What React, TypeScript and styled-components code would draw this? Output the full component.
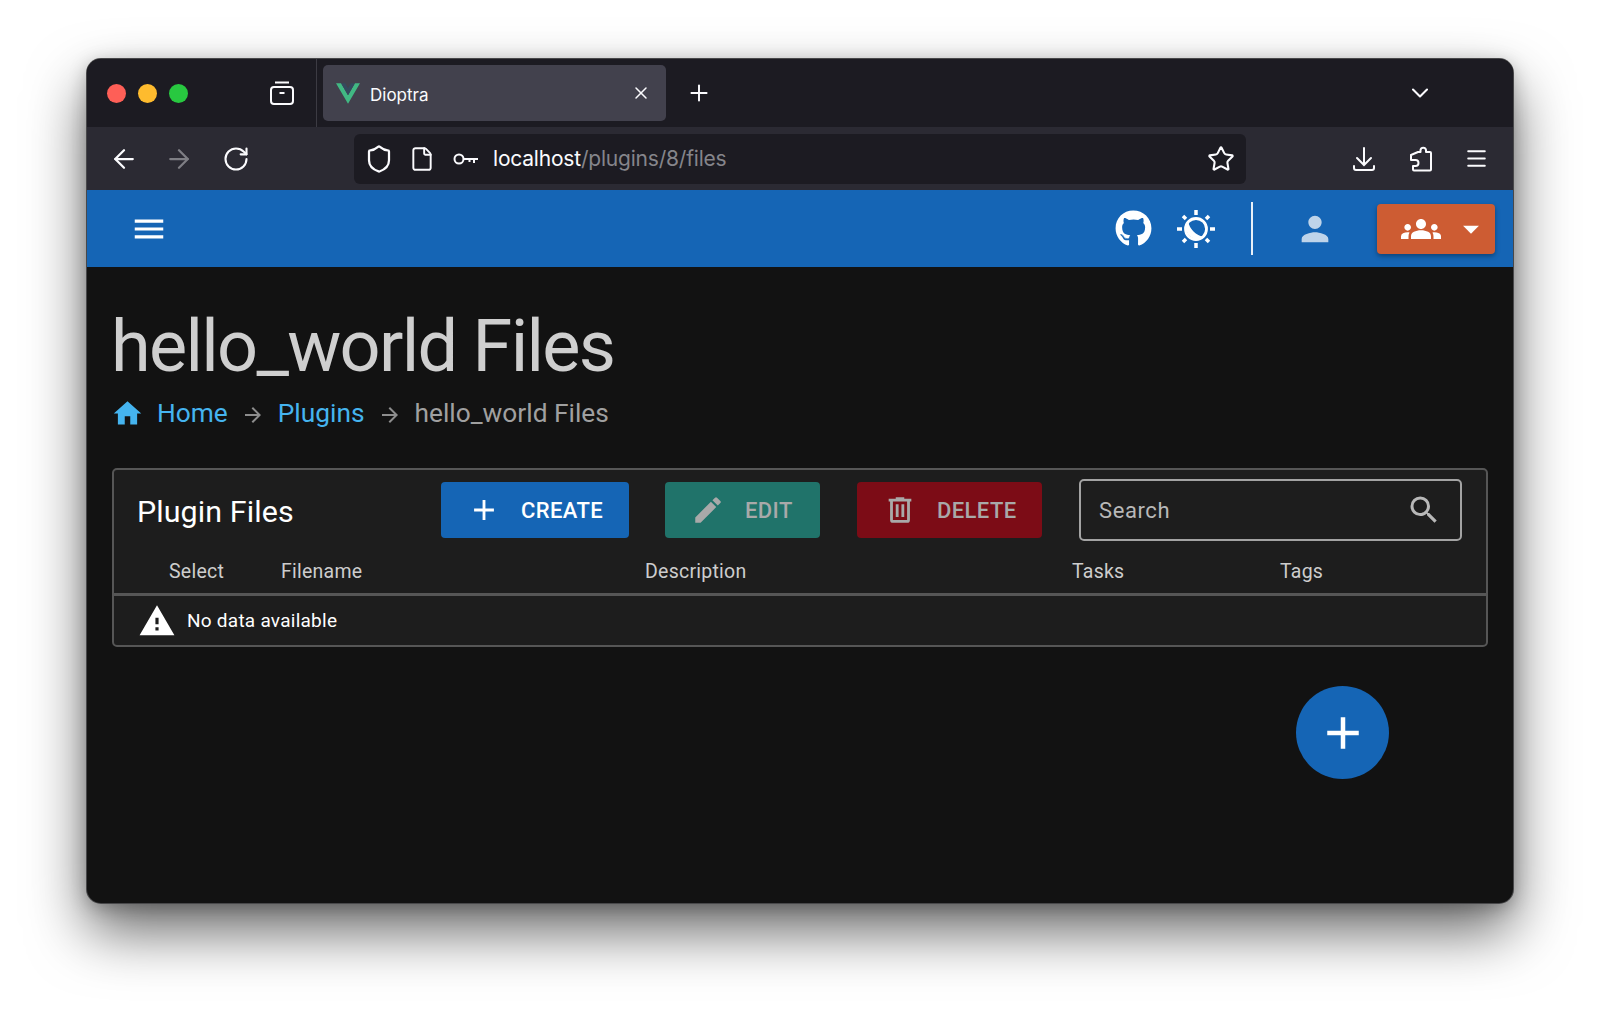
import * as React from "react";
import styled, { createGlobalStyle } from "styled-components";
import { ArrowLeft, ArrowRight, ChevronDown, File, Menu, Plus, RotateCw, Shield, Star, X } from "lucide-react";
import { FaGithub } from "react-icons/fa";
import { MdAdd, MdArrowDropDown, MdArrowForward, MdEdit, MdGroups, MdHome, MdMenu, MdPerson, MdSearch, MdWarning } from "react-icons/md";

const GlobalStyle = createGlobalStyle`
  html, body {
    margin: 0;
    padding: 0;
    background: #fff;
    overflow: hidden;
  }
  body {
    font-family: Roboto, "Liberation Sans", sans-serif;
  }
`;

const Stage = styled.div`
  width: 1600px;
  height: 1018px;
  padding: 59px 87px 0;
  box-sizing: border-box;
`;

const Window = styled.div`
  width: 1426px;
  height: 844px;
  display: flex;
  flex-direction: column;
  border-radius: 14px;
  overflow: hidden;
  background: #121212;
  box-shadow: 0 0 0 1px #48484a, 0 28px 58px rgba(0, 0, 0, 0.6), 0 4px 18px rgba(0, 0, 0, 0.25);
`;

const TabStrip = styled.div`
  height: 68px;
  flex: none;
  display: flex;
  align-items: center;
  background: #1c1b22;
  color: #fbfbfe;
`;

const Lights = styled.div`
  display: flex;
  gap: 12px;
  margin-left: 20px;
`;

const Light = styled.span<{ $color: string }>`
  width: 19px;
  height: 19px;
  border-radius: 50%;
  background: ${(p) => p.$color};
`;

const ViewButton = styled.div`
  width: 26px;
  height: 26px;
  margin-left: 81px;
  margin-right: 21px;
  display: flex;
`;

const Separator = styled.div`
  width: 1px;
  height: 100%;
  background: #3c3b43;
`;

const Tab = styled.div`
  width: 343px;
  height: 56px;
  margin-left: 6px;
  display: flex;
  align-items: center;
  border-radius: 5px;
  background: #42414d;
  font-family: Inter, sans-serif;
  font-size: 17px;
`;

const TabTitle = styled.span`
  margin-left: 10px;
  flex: 1;
  margin-top: 3px;
`;

const TabClose = styled.span`
  display: flex;
  margin-right: 15px;
`;

const NewTab = styled.span`
  display: flex;
  margin-left: 20px;
  flex: 1;
`;

const TabList = styled.span`
  display: flex;
  margin-right: 79px;
`;

const NavBar = styled.div`
  height: 63px;
  flex: none;
  display: flex;
  align-items: center;
  background: #2b2a33;
  color: #fbfbfe;
`;

const NavButton = styled.span<{ $dim?: boolean; $gap: number }>`
  display: flex;
  margin-left: ${(p) => p.$gap}px;
  opacity: ${(p) => (p.$dim ? 0.4 : 1)};
`;

const UrlBar = styled.div`
  width: 892px;
  height: 50px;
  margin-left: 104px;
  display: flex;
  align-items: center;
  border-radius: 6px;
  background: #1c1b22;
`;

const UrlText = styled.div`
  margin-left: 14px;
  flex: 1;
  font-family: Inter, sans-serif;
  font-size: 21px;
  letter-spacing: -0.2px;
  color: #fbfbfe;

  span {
    color: #85858b;
  }
`;

const StarButton = styled.span`
  display: flex;
  margin-right: 11px;
`;

const AppBar = styled.header`
  height: 77px;
  flex: none;
  display: flex;
  align-items: center;
  background: #1565b5;
  color: #fff;
`;

const BarIcon = styled.span<{ $gap: number; $dim?: boolean }>`
  display: flex;
  margin-left: ${(p) => p.$gap}px;
  opacity: ${(p) => (p.$dim ? 0.72 : 1)};
`;

const BarDivider = styled.div`
  width: 2px;
  height: 53px;
  margin-left: 35px;
  background: #fff;
  opacity: 0.9;
`;

const GroupButton = styled.button`
  width: 118px;
  height: 50px;
  margin-left: 42px;
  padding: 0 5px 0 24px;
  display: flex;
  align-items: center;
  justify-content: space-between;
  border: 0;
  border-radius: 4px;
  background: #cd5c33;
  color: #fff;
  box-shadow: 0 2px 5px rgba(0, 0, 0, 0.35);
`;

const Main = styled.main`
  flex: 1;
  display: flex;
  flex-direction: column;
  padding: 0 25px;
  color: #ccc;
`;

const Title = styled.h1`
  margin: 38px 0 0 -1px;
  font-size: 72px;
  line-height: 84px;
  font-weight: 400;
  letter-spacing: -1.7px;
  color: #cfcfcf;
`;

const Crumbs = styled.nav`
  margin-top: 9px;
  display: flex;
  align-items: center;
  height: 30px;
  font-size: 26.3px;
  color: #a0a0a0;
`;

const CrumbLink = styled.a`
  color: #45b4ef;
  text-decoration: none;
`;

const HomeIcon = styled.span`
  display: flex;
  margin-left: -1px;
  margin-right: 13px;
  color: #45b4ef;
`;

const CrumbArrow = styled.span`
  display: flex;
  margin: 3px 13px 0 13px;
  color: #8d8d8d;
`;

const Card = styled.section`
  margin-top: 40px;
  width: 1376px;
  height: 179px;
  box-sizing: border-box;
  border: 2px solid #565656;
  border-radius: 5px;
  background: #1d1d1d;
  display: flex;
  flex-direction: column;
`;

const CardTop = styled.div`
  height: 80px;
  flex: none;
  display: flex;
  align-items: center;
`;

const CardTitle = styled.h2`
  width: 304px;
  margin: 2px 0 0 23px;
  font-size: 30.4px;
  font-weight: 400;
  letter-spacing: 0.1px;
  color: #fff;
`;

const ActionButton = styled.button<{ $bg: string; $w: number; $on?: boolean; $gap: number }>`
  width: ${(p) => p.$w}px;
  height: 56px;
  margin-right: ${(p) => p.$gap}px;
  padding: 0 0 0 26px;
  flex: none;
  display: flex;
  align-items: center;
  gap: 20px;
  border: 0;
  border-radius: 4px;
  background: ${(p) => p.$bg};
  color: ${(p) => (p.$on ? "#fff" : "#a9a9a9")};
  font-family: inherit;
  font-size: 22px;
  font-weight: 500;
  letter-spacing: 0.4px;
  box-sizing: border-box;
`;

const SearchBox = styled.div`
  width: 383px;
  height: 62px;
  box-sizing: border-box;
  flex: none;
  display: flex;
  align-items: center;
  justify-content: space-between;
  padding: 0 18px;
  border: 2px solid #a3a3a3;
  border-radius: 5px;
  font-size: 22px;
  color: #b8b8b8;
  letter-spacing: 0.6px;
`;

const HeadRow = styled.div`
  flex: none;
  height: 46px;
  padding: 0 0 0 55px;
  display: grid;
  grid-template-columns: 112px 364px 427px 208px auto;
  align-items: center;
  box-sizing: border-box;
  border-bottom: 3px solid #565656;
  font-size: 19.5px;
  font-weight: 400;
  letter-spacing: 0.25px;
  color: #cdcdcd;
`;

const EmptyRow = styled.div`
  flex: 1;
  display: flex;
  align-items: center;
  padding-left: 24px;
  gap: 11px;
  font-size: 19px;
  letter-spacing: 0.25px;
  color: #fff;
`;

const Fab = styled.button`
  width: 93px;
  height: 93px;
  margin: 39px 0 0 1184px;
  display: flex;
  align-items: center;
  justify-content: center;
  padding: 0;
  border: 0;
  border-radius: 50%;
  background: #1565b5;
  color: #fff;
`;

const ThemeIcon = () => (
  <svg width="40" height="40" viewBox="0 0 40 40" fill="#fff">
    <g stroke="#fff" strokeWidth="3.500">
      <path d="M20 1v5M20 34v5M1 20h5M34 20h5M7 7l3 3M30 30l3 3M7 33l3-3M30 10l3-3" />
    </g>
    <circle cx="20" cy="20" r="10.500" fill="none" stroke="#fff" strokeWidth="2.800" />
    <path d="M12 12 A11.500 11.500 0 0 0 28 28 A20 20 0 0 1 12 12Z" />
  </svg>
);

const ViewIcon = () => (
  <svg width="26" height="26" viewBox="0 0 26 26" fill="none" stroke="#fbfbfe" strokeWidth="2">
    <path d="M6 2.500h14" />
    <rect x="2" y="7" width="22" height="17" rx="3" />
    <path d="M10.500 13h5" />
  </svg>
);

const VueLogo = () => (
  <svg width="24" height="21" viewBox="0 0 26 22" style={{ marginLeft: 13 }}>
    <path d="M0 0h5.500L13 13 20.500 0H26L13 22z" fill="#41b883" />
    <path d="M5.500 0h4.500L13 5.500 16 0h4.500L13 13z" fill="#35495e" />
  </svg>
);

const KeyIcon = () => (
  <svg width="26" height="14" viewBox="0 0 26 14" fill="none" stroke="#fbfbfe" strokeWidth="2" style={{ marginLeft: 18 }}>
    <circle cx="6" cy="7" r="4.500" />
    <path d="M10.500 7H25M21 7v4M16.500 7v3" />
  </svg>
);

const DownloadIcon = () => (
  <svg width="24" height="26" viewBox="0 0 24 26" fill="none" stroke="#fbfbfe" strokeWidth="2" strokeLinecap="round">
    <path d="M12 2v16M5 12l7 7 7-7M2 20v2a2 2 0 0 0 2 2h16a2 2 0 0 0 2-2v-2" />
  </svg>
);

const PuzzleIcon = () => (
  <svg width="24" height="26" viewBox="0 0 24 26" fill="none" stroke="#fbfbfe" strokeWidth="2" strokeLinejoin="round">
    <path d="M9 6h2.500V4a2.800 2.800 0 0 1 5.500 0v2h4a1 1 0 0 1 1 1v16.500a1 1 0 0 1-1 1H5a1 1 0 0 1-1-1V20h2.500a3 3 0 0 0 0-6H2V9z" />
  </svg>
);

const TrashIcon = () => (
  <svg width="34" height="34" viewBox="0 0 24 24" fill="currentColor">
    <path d="M9,3V4H4V6H5V19A2,2 0 0,0 7,21H17A2,2 0 0,0 19,19V6H20V4H15V3H9M7,6H17V19H7V6M9,8V17H11V8H9M13,8V17H15V8H13Z" />
  </svg>
);

const App: React.FC = () => {
  return (
    <Stage>
      <GlobalStyle />
      <Window>
        <TabStrip>
          <Lights>
            <Light $color="#fe5f57" />
            <Light $color="#febb2e" />
            <Light $color="#28c840" />
          </Lights>
          <ViewButton>
            <ViewIcon />
          </ViewButton>
          <Separator />
          <Tab>
            <VueLogo />
            <TabTitle>Dioptra</TabTitle>
            <TabClose>
              <X size={20} strokeWidth={1.8} />
            </TabClose>
          </Tab>
          <NewTab>
            <Plus size={26} strokeWidth={1.8} />
          </NewTab>
          <TabList>
            <ChevronDown size={28} strokeWidth={1.8} />
          </TabList>
        </TabStrip>
        <NavBar>
          <NavButton $gap={22}>
            <ArrowLeft size={30} strokeWidth={1.8} />
          </NavButton>
          <NavButton $gap={25} $dim>
            <ArrowRight size={30} strokeWidth={1.8} />
          </NavButton>
          <NavButton $gap={28}>
            <RotateCw size={28} strokeWidth={1.8} />
          </NavButton>
          <UrlBar>
            <NavButton $gap={10}>
              <Shield size={30} strokeWidth={1.8} />
            </NavButton>
            <NavButton $gap={15}>
              <File size={26} strokeWidth={1.8} />
            </NavButton>
            <KeyIcon />
            <UrlText>
              localhost<span>/plugins/8/files</span>
            </UrlText>
            <StarButton>
              <Star size={28} strokeWidth={1.8} />
            </StarButton>
          </UrlBar>
          <NavButton $gap={106}>
            <DownloadIcon />
          </NavButton>
          <NavButton $gap={33}>
            <PuzzleIcon />
          </NavButton>
          <NavButton $gap={31}>
            <Menu size={25} strokeWidth={1.8} />
          </NavButton>
        </NavBar>
        <AppBar>
          <BarIcon $gap={43}>
            <MdMenu size={38} />
          </BarIcon>
          <BarIcon $gap={947}>
            <FaGithub size={37} />
          </BarIcon>
          <BarIcon $gap={24}>
            <ThemeIcon />
          </BarIcon>
          <BarDivider />
          <BarIcon $gap={42} $dim>
            <MdPerson size={40} />
          </BarIcon>
          <GroupButton>
            <MdGroups size={40} />
            <MdArrowDropDown size={38} />
          </GroupButton>
        </AppBar>
        <Main>
          <Title>hello_world Files</Title>
          <Crumbs>
            <HomeIcon>
              <MdHome size={33} />
            </HomeIcon>
            <CrumbLink>Home</CrumbLink>
            <CrumbArrow>
              <MdArrowForward size={24} />
            </CrumbArrow>
            <CrumbLink>Plugins</CrumbLink>
            <CrumbArrow>
              <MdArrowForward size={24} />
            </CrumbArrow>
            <span>hello_world Files</span>
          </Crumbs>
          <Card>
            <CardTop>
              <CardTitle>Plugin Files</CardTitle>
              <ActionButton $bg="#1565b5" $w={188} $on $gap={36}>
                <MdAdd size={34} />
                CREATE
              </ActionButton>
              <ActionButton $bg="#20736a" $w={155} $gap={37}>
                <MdEdit size={34} />
                EDIT
              </ActionButton>
              <ActionButton $bg="#7c0c16" $w={185} $gap={37}>
                <TrashIcon />
                DELETE
              </ActionButton>
              <SearchBox>
                Search
                <MdSearch size={36} />
              </SearchBox>
            </CardTop>
            <HeadRow>
              <span>Select</span>
              <span>Filename</span>
              <span>Description</span>
              <span>Tasks</span>
              <span>Tags</span>
            </HeadRow>
            <EmptyRow>
              <MdWarning size={38} />
              No data available
            </EmptyRow>
          </Card>
          <Fab>
            <MdAdd size={54} />
          </Fab>
        </Main>
      </Window>
    </Stage>
  );
};

export default App;
